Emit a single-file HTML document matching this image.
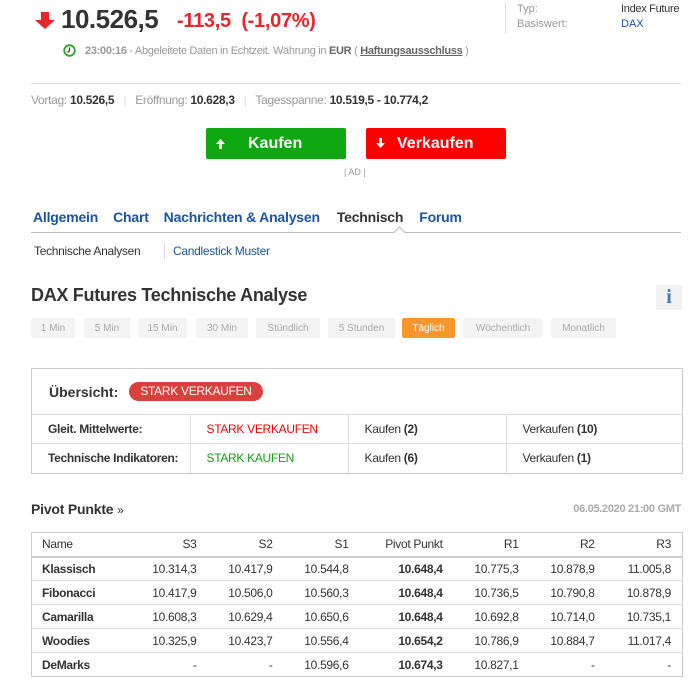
<!DOCTYPE html>
<html><head><meta charset="utf-8"><style>
*{margin:0;padding:0;box-sizing:border-box}
body{width:694px;height:696px;background:#fff;font-family:"Liberation Sans",Arial,sans-serif;color:#333;position:relative;overflow:hidden}
.a{position:absolute;white-space:nowrap}
.g{color:#999}
.b{font-weight:bold}
.blue{color:#1a55a0}
.tf{position:absolute;top:318px;height:20px;background:#f4f4f4;color:#aaa;font-size:10px;line-height:21px;text-align:center;border-radius:2px}
table{border-collapse:collapse}
.ov{position:absolute;left:31px;top:368px;width:652px;border:1px solid #ccc}
.ov td{border-top:1px solid #ddd;border-left:1px solid #ddd;height:29px;font-size:12px;padding-left:16px;letter-spacing:-.3px}
.pv{position:absolute;left:31px;top:532px;width:652px;border:1px solid #ccc;font-size:12px;letter-spacing:-.3px}
.pv td,.pv th{height:24px;text-align:right;padding-right:11px;font-weight:normal}
.pv th{height:24px;border-bottom:2px solid #ccc}
.pv td{border-top:1px solid #e0e0e0}
.pv td:first-child,.pv th:first-child{text-align:left;padding-left:10px;padding-right:0}
.pv td:first-child{font-weight:bold;color:#333}
.pv td:nth-child(5){font-weight:bold}
</style></head><body>
<svg class="a" style="left:35px;top:12px" width="20" height="17" viewBox="0 0 20 17"><path d="M6 0h8v8h6l-10 9L0 8h6z" fill="#e8262a"/></svg>
<div class="a b" style="left:61px;top:4px;font-size:26px;color:#333;letter-spacing:-.5px">10.526,5</div>
<div class="a b" style="left:177px;top:10px;font-size:20px;color:#e8262a;letter-spacing:-.3px">-113,5&nbsp; (-1,07%)</div>
<div class="a" style="left:505px;top:2px;width:1px;height:31px;background:#ddd"></div>
<div class="a g" style="left:517px;top:3px;font-size:11px">Typ:</div>
<div class="a" style="left:621px;top:3px;font-size:11px;color:#333;letter-spacing:-.3px">Index Future</div>
<div class="a g" style="left:517px;top:18px;font-size:11px">Basiswert:</div>
<div class="a blue" style="left:621px;top:18px;font-size:11px">DAX</div>
<svg class="a" style="left:63px;top:44px" width="13" height="13" viewBox="0 0 13 13"><circle cx="6.5" cy="6.5" r="5.3" fill="none" stroke="#2aa32a" stroke-width="1.8"/><path d="M6.5 3.5v3.3l-2 1.6" fill="none" stroke="#333" stroke-width="1.2"/></svg>
<div class="a g" style="left:85px;top:45px;font-size:11px;letter-spacing:-.3px"><b>23:00:16</b> - Abgeleitete Daten in Echtzeit. Währung in <b style="color:#666">EUR</b> ( <span style="color:#666;text-decoration:underline;font-weight:bold">Haftungsausschluss</span> )</div>
<div class="a" style="left:31px;top:83px;width:650px;height:1px;background:#ddd"></div>
<div class="a g" style="left:31px;top:93px;font-size:12px;letter-spacing:-.3px">Vortag: <b style="color:#333">10.526,5</b> <span style="color:#ddd;margin:0 6px">|</span> Eröffnung: <b style="color:#333">10.628,3</b> <span style="color:#ddd;margin:0 6px">|</span> Tagesspanne: <b style="color:#333">10.519,5 - 10.774,2</b></div>
<div class="a b" style="left:206px;top:128px;width:140px;height:31px;background:#10a810;border-radius:2px;color:#fff;font-size:16px;line-height:31px"><svg style="position:absolute;left:10px;top:11px" width="9" height="10" viewBox="0 0 9 10"><path d="M4.5 0L9 5H6v5H3V5H0z" fill="#fff"/></svg><span style="position:absolute;left:42px">Kaufen</span></div>
<div class="a b" style="left:366px;top:128px;width:140px;height:31px;background:#f00;border-radius:2px;color:#fff;font-size:16px;line-height:31px"><svg style="position:absolute;left:10px;top:10px" width="9" height="10" viewBox="0 0 9 10"><path d="M3 0h3v5h3L4.5 10 0 5h3z" fill="#fff"/></svg><span style="position:absolute;left:31px">Verkaufen</span></div>
<div class="a g" style="left:344px;top:167px;font-size:9px">| AD |</div>
<div class="a b" style="left:33px;top:209px;font-size:14px;letter-spacing:-.2px"><span class="blue">Allgemein</span><span class="blue" style="margin-left:15px">Chart</span><span class="blue" style="margin-left:15px">Nachrichten &amp; Analysen</span><span style="margin-left:17px;color:#333">Technisch</span><span class="blue" style="margin-left:16px">Forum</span></div>
<div class="a" style="left:31px;top:232px;width:650px;height:1px;background:#bbb"></div>
<svg class="a" style="left:393px;top:226px" width="13" height="7"><path d="M0.5 7L6.5 1 12.5 7" fill="#fff" stroke="#bbb"/></svg>
<div class="a" style="left:34px;top:244px;font-size:12px;letter-spacing:-.3px;color:#333">Technische Analysen</div>
<div class="a" style="left:164px;top:243px;width:1px;height:16px;background:#ddd"></div>
<div class="a blue" style="left:173px;top:244px;font-size:12px;letter-spacing:-.3px">Candlestick Muster</div>
<div class="a b" style="left:31px;top:285px;font-size:18px;letter-spacing:-.3px;color:#333">DAX Futures Technische Analyse</div>
<div class="a" style="left:656px;top:285px;width:26px;height:25px;background:#f2f2f2;color:#3d7ac0;font-family:'Liberation Serif',serif;font-weight:bold;font-size:20px;text-align:center;line-height:25px">i</div>
<div class="tf" style="left:31px;width:44px">1 Min</div>
<div class="tf" style="left:84px;width:46px">5 Min</div>
<div class="tf" style="left:138px;width:49px">15 Min</div>
<div class="tf" style="left:196px;width:52px">30 Min</div>
<div class="tf" style="left:256px;width:64px">Stündlich</div>
<div class="tf" style="left:328px;width:67px">5 Stunden</div>
<div class="tf" style="left:402px;width:53px;background:#f7962b;color:#fff">Täglich</div>
<div class="tf" style="left:463px;width:80px">Wöchentlich</div>
<div class="tf" style="left:551px;width:65px">Monatlich</div>
<div class="ov"><div style="height:45px;position:relative"><span class="a b" style="left:17px;top:15px;font-size:14px;color:#333">Übersicht:</span><span class="a" style="left:97px;top:13px;width:134px;height:19px;border-radius:10px;background:#d9413d;color:#fff;font-size:12px;line-height:19px;text-align:center;letter-spacing:-.3px">STARK VERKAUFEN</span></div>
<table style="width:100%"><tr><td style="border-left:none;width:158px" class="b">Gleit. Mittelwerte:</td><td style="width:158px;color:#f00">STARK VERKAUFEN</td><td style="width:158px">Kaufen <b>(2)</b></td><td>Verkaufen <b>(10)</b></td></tr>
<tr><td style="border-left:none" class="b">Technische Indikatoren:</td><td style="color:#10a010">STARK KAUFEN</td><td>Kaufen <b>(6)</b></td><td>Verkaufen <b>(1)</b></td></tr></table></div>
<div class="a b" style="left:31px;top:501px;font-size:14px;letter-spacing:-.2px;color:#333">Pivot Punkte <span style="font-weight:normal;font-size:12px">»</span></div>
<div class="a b" style="right:13px;top:503px;font-size:11px;color:#aaa;letter-spacing:-.3px">06.05.2020 21:00 GMT</div>
<table class="pv">
<tr><th style="width:100px">Name</th><th>S3</th><th>S2</th><th>S1</th><th>Pivot Punkt</th><th>R1</th><th>R2</th><th>R3</th></tr>
<tr><td>Klassisch</td><td>10.314,3</td><td>10.417,9</td><td>10.544,8</td><td>10.648,4</td><td>10.775,3</td><td>10.878,9</td><td>11.005,8</td></tr>
<tr><td>Fibonacci</td><td>10.417,9</td><td>10.506,0</td><td>10.560,3</td><td>10.648,4</td><td>10.736,5</td><td>10.790,8</td><td>10.878,9</td></tr>
<tr><td>Camarilla</td><td>10.608,3</td><td>10.629,4</td><td>10.650,6</td><td>10.648,4</td><td>10.692,8</td><td>10.714,0</td><td>10.735,1</td></tr>
<tr><td>Woodies</td><td>10.325,9</td><td>10.423,7</td><td>10.556,4</td><td>10.654,2</td><td>10.786,9</td><td>10.884,7</td><td>11.017,4</td></tr>
<tr><td>DeMarks</td><td>-</td><td>-</td><td>10.596,6</td><td>10.674,3</td><td>10.827,1</td><td>-</td><td>-</td></tr>
</table>
</body></html>
